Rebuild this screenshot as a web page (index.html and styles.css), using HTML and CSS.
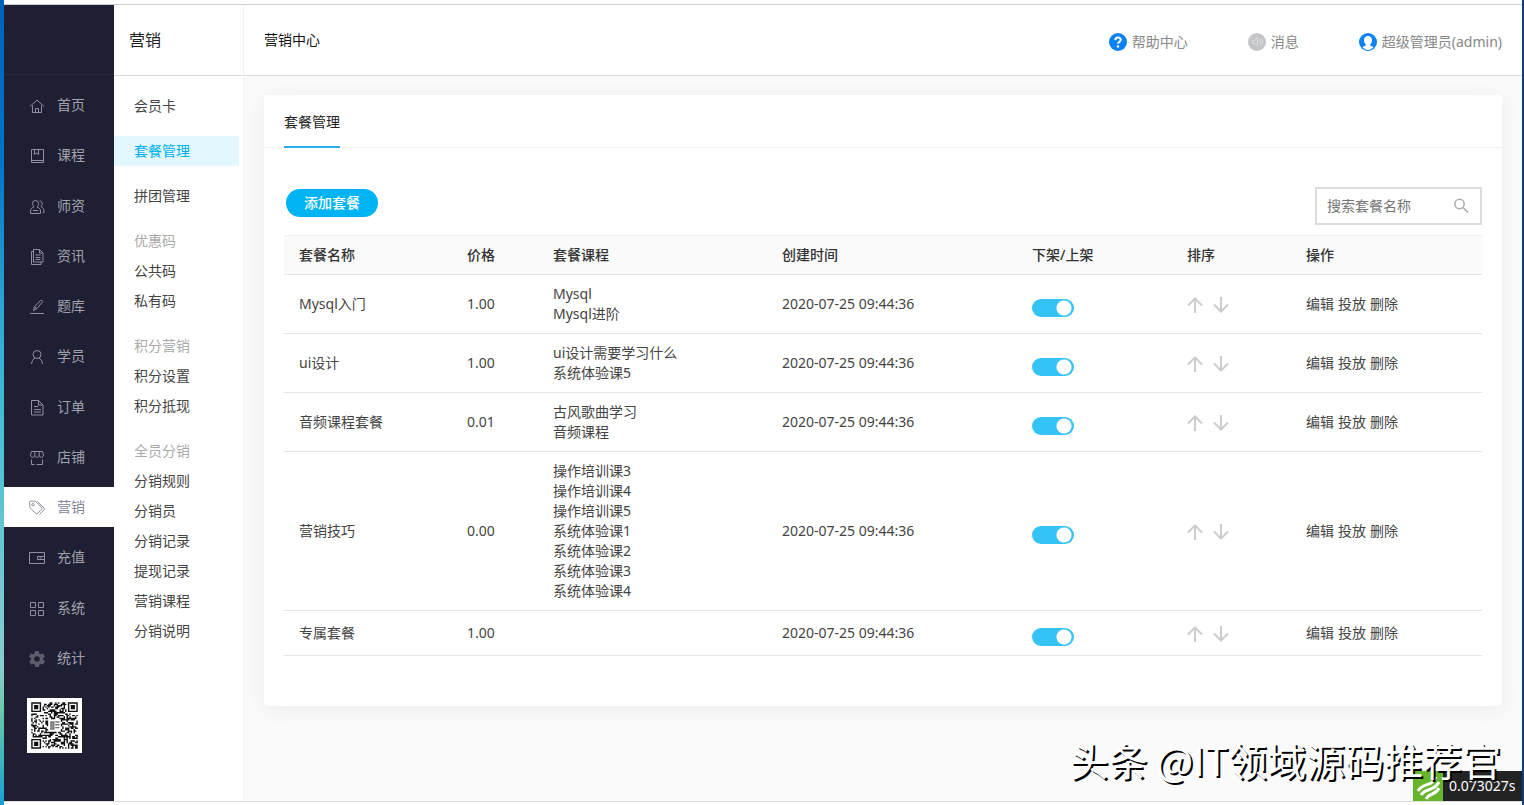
FILE: index.html
```
<!DOCTYPE html>
<html lang="zh-CN">
<head>
<meta charset="utf-8">
<title>营销中心</title>
<link rel="stylesheet" href="styles.css">
</head>
<body>
<div class="desktop">
<div class="window">
  <nav class="sidebar">
    <div class="brand"></div>
    <ul class="menu">
      <li><a href="#"><svg viewBox="0 0 16 16"><path d="M1 8.500 8 2l7 6.500M3.500 7.500V14.500h9V7.500M6.500 14.500v-4h3v4"/></svg>首页</a></li>
      <li><a href="#"><svg viewBox="0 0 16 16"><path d="M2.500 1.500h12v13h-12zM2.500 12.500h12M5.500 1.500v5l2-1.500 2 1.500v-5"/></svg>课程</a></li>
      <li><a href="#"><svg viewBox="0 0 16 16"><path d="M6.500 1.500a3 3 0 0 1 3 3.200c0 1.500-.7 2.600-1.500 3.300 2 .7 3.500 2 3.500 4v2.500h-10V12c0-2 1.500-3.300 3.500-4-.8-.7-1.500-1.800-1.500-3.300a3 3 0 0 1 3-3.200zM10.500 2c2 0 3 1.500 2.700 3.200-.2 1-.7 1.700-1.200 2.300 1.700.9 3 2.200 3 4.500v1.500h-1.500M4 11.500h5"/></svg>师资</a></li>
      <li><a href="#"><svg viewBox="0 0 16 16"><path d="M4.500.500h6l3.500 3.500v9h-9.500zM10.500.500v3.500H14M4.500 2.500h-2v13h9.500V13M6.500 6h5M6.500 8.500h5M6.500 10.500h5"/></svg>资讯</a></li>
      <li><a href="#"><svg viewBox="0 0 16 16"><path d="m4.500 11.500.8-3.500L11.500 1.500q1.500-.8 2.300 1L8 9.500zM5.300 8 8 9.500M1 14.500h14"/></svg>题库</a></li>
      <li><a href="#"><svg viewBox="0 0 16 16"><circle cx="8" cy="5.500" r="4"/><path d="M6 9c-2 1-3 3-3.500 6M10 9c2 1 3 3 3.500 6"/></svg>学员</a></li>
      <li><a href="#"><svg viewBox="0 0 16 16"><path d="M2.500.500h7l4.500 4.500v10h-11.500zM9.500.500V5H14M5 6.500h4M5 9.500h7M5 12h7"/></svg>订单</a></li>
      <li><a href="#"><svg viewBox="0 0 16 16"><path d="M2.500 1.500h11l1 3.500c0 3-4 3-4.300.3C10 8 6 8 5.800 5.300 5.500 8 1.500 8 1.500 5zM5.800 5.300V1.500M10.200 5.300V1.500M2.500 9.500v5h3M13.500 9.500v5h-6"/></svg>店铺</a></li>
      <li class="active"><a href="#"><svg viewBox="0 0 16 16"><path d="M.5 2Q.8 1.200 2 1.200h4.500l6 6.300q.7 1 0 1.800L8.500 13.500q-1 .8-1.800 0L1 7.500zM8.500 1.500l6.500 6.500q.8 1 0 1.800L10.500 14.500"/><circle cx="4" cy="4.700" r="1.200"/></svg>营销</a></li>
      <li><a href="#"><svg viewBox="0 0 16 16"><path d="M.5 2.500h15v11H.5zM15.500 6.500h-7v3h7M10.500 8h2"/></svg>充值</a></li>
      <li><a href="#"><svg viewBox="0 0 16 16"><path d="M1.500 1.500h5v5h-5zM9.500 1.500h5v5h-5zM1.500 9.500h5v5h-5zM9.500 9.500h5v5h-5z"/></svg>系统</a></li>
      <li><a href="#"><svg class="gear" viewBox="2 2 20 20"><path d="M19.400 13a7.800 7.800 0 0 0 0-2l2.100-1.600a.5.5 0 0 0 .1-.6l-2-3.500a.5.5 0 0 0-.6-.2l-2.500 1a7.300 7.300 0 0 0-1.700-1l-.4-2.600a.5.500 0 0 0-.5-.5h-4a.5.5 0 0 0-.5.500l-.4 2.600a7.300 7.300 0 0 0-1.700 1l-2.500-1a.5.5 0 0 0-.6.2l-2 3.500a.5.5 0 0 0 .1.600L4.600 11a7.800 7.800 0 0 0 0 2l-2.100 1.600a.5.5 0 0 0-.1.600l2 3.500c.1.200.4.300.6.200l2.500-1a7.300 7.300 0 0 0 1.700 1l.4 2.600c0 .3.200.5.500.5h4c.3 0 .5-.2.500-.5l.4-2.600a7.300 7.300 0 0 0 1.700-1l2.500 1c.2.100.5 0 .6-.2l2-3.500a.5.5 0 0 0-.1-.6zM12 15.500a3.500 3.500 0 1 1 0-7 3.500 3.500 0 0 1 0 7z"/></svg>统计</a></li>
    </ul>
    <svg class="qr" id="qr" viewBox="0 0 39 39" role="img" aria-label="二维码"></svg>
  </nav>

  <aside class="submenu">
    <h1 class="submenu-title">营销</h1>
    <div class="submenu-body">
      <a href="#">会员卡</a>
      <a href="#" class="current">套餐管理</a>
      <a href="#">拼团管理</a>
      <section>
        <h2>优惠码</h2>
        <a href="#">公共码</a>
        <a href="#">私有码</a>
      </section>
      <section>
        <h2>积分营销</h2>
        <a href="#">积分设置</a>
        <a href="#">积分抵现</a>
      </section>
      <section>
        <h2>全员分销</h2>
        <a href="#">分销规则</a>
        <a href="#">分销员</a>
        <a href="#">分销记录</a>
        <a href="#">提现记录</a>
        <a href="#">营销课程</a>
        <a href="#">分销说明</a>
      </section>
    </div>
  </aside>

  <div class="main">
    <header class="topbar">
      <span class="crumb">营销中心</span>
      <div class="tools">
        <a href="#"><svg viewBox="0 0 18 18"><circle cx="9" cy="9" r="9" fill="#0a82f5"/><path d="M6.300 7.200c0-3.600 5.400-3.600 5.400-.4 0 1.900-2.700 2-2.700 4" fill="none" stroke="#fff" stroke-width="2"/><circle cx="9" cy="13.500" r="1.200" fill="#fff"/></svg>帮助中心</a>
        <a href="#"><svg viewBox="0 0 18 18"><circle cx="9" cy="9" r="9" fill="#c3c5c9"/><path d="M4.500 7.500h2l3-2.500v8l-3-2.500h-2zM11.500 7c1 1 1 3 0 4M13 5.500c2 2 2 5 0 7" fill="none" stroke="#dcdde0"/></svg>消息</a>
        <a href="#"><svg viewBox="0 0 18 18"><circle cx="9" cy="9" r="9" fill="#0a82f5"/><path d="M9 3c2.700 0 4 1.900 4 4.300 0 2-.8 3.500-2 4.300.2 1.400 1.800 1.900 3.700 2.500C13 16.200 11 17 9 17s-4-.8-5.700-2.900c1.900-.6 3.500-1.100 3.700-2.500-1.200-.8-2-2.300-2-4.300C5 4.900 6.300 3 9 3z" fill="#fff"/></svg>超级管理员(admin)</a>
      </div>
    </header>

    <main class="content">
      <div class="card">
        <div class="tabs"><a href="#" class="tab">套餐管理</a></div>
        <div class="card-body">
          <div class="actions">
            <button class="add" type="button">添加套餐</button>
            <label class="search">
              <input type="text" placeholder="搜索套餐名称" aria-label="搜索套餐名称">
              <svg viewBox="0 0 16 16"><circle cx="6.500" cy="6" r="4.700"/><path d="m10 9.500 5 5"/></svg>
            </label>
          </div>
          <table class="packages">
            <colgroup><col class="c-name"><col class="c-price"><col class="c-course"><col class="c-time"><col class="c-state"><col class="c-sort"><col class="c-ops"></colgroup>
            <thead><tr><th>套餐名称</th><th>价格</th><th>套餐课程</th><th>创建时间</th><th>下架/上架</th><th>排序</th><th>操作</th></tr></thead>
            <tbody id="rows"></tbody>
          </table>
        </div>
      </div>
    </main>
  </div>

  <div class="watermark">头条 @IT领域源码推荐官</div>
  <div class="trace">
    <svg viewBox="0 0 30 30"><path fill="#67b52b" d="M0 0h30v30H0z"/><path d="M5 20C10 11 18 17 23 6M8 24c5-8 13-3 18-13M13 28c4-7 9-3 13-11" fill="none" stroke="#fff" stroke-width="3"/></svg>
    <span>0.073027s</span>
  </div>
</div>
</div>
<script src="script.js"></script>
</body>
</html>
```
FILE: styles.css
```
* { box-sizing: border-box; }
body {
  margin: 0;
  font-family: "Noto Sans", "Noto Sans CJK SC", sans-serif;
  font-size: 14px;
  line-height: 20px;
  color: #444;
}
a { color: inherit; text-decoration: none; }
ul, h1, h2 { margin: 0; padding: 0; list-style: none; font-weight: 400; }

/* Desktop edges showing on either side of the window */
.desktop {
  min-height: 100vh;
  padding: 4px 2px 3px 4px;
  background:
    linear-gradient(#fff, #fff) 4px 0 / calc(100% - 6px) 100% no-repeat,
    linear-gradient(#0f3f7a, #0f3f7a) 100% 0 / 2px 100% no-repeat,
    linear-gradient(#0062b8 0%, #0075c8 20%, #2aa5d4 38%, #4fc0d6 55%, #8accd0 83%, #6cc9a8 88%, #189fd2 100%);
}
.window {
  position: relative;
  display: flex;
  min-height: calc(100vh - 7px);
  border-top: 1px solid #ccc;
  border-bottom: 1px solid #ddd;
  background: #fafafa;
}

.sidebar { flex: none; width: 110px; background: #1e1f32; color: #a1a2ad; }
.brand { height: 70px; border-bottom: 1px solid #2a2b3d; }
.menu {
  display: flex;
  flex-direction: column;
  justify-content: space-between;
  height: 593px;
  margin: 10px 0 20px;
}
.menu a { display: flex; align-items: center; gap: 12px; height: 40px; padding: 0 25px; white-space: nowrap; }
.menu svg { flex: none; width: 16px; height: 16px; margin-top: 2px; fill: none; stroke: #8f90a0; overflow: visible; }
.menu .gear { fill: #5c5e6d; stroke: none; }
.menu .active { background: #fff; color: #85869a; }
.qr { display: block; width: 55px; height: 55px; margin-left: 23px; background: #fff; }

.submenu { flex: none; width: 130px; background: #fff; border-right: 1px solid #f2f2f2; }
.submenu-title {
  height: 71px;
  padding: 0 15px;
  border-bottom: 1px solid #ddd;
  font-size: 16px;
  line-height: 70px;
  color: #222;
}
.submenu-body { display: flex; flex-direction: column; gap: 15px; padding: 15px 4px 0 0; }
.submenu-body a, .submenu-body h2 { display: block; padding: 0 20px; font-size: 14px; line-height: 30px; }
.submenu-body h2 { color: #aaa; }
.submenu-body .current { background: #e3f7ff; color: #00b0ee; }

.main { flex: 1; min-width: 0; }
.topbar {
  display: flex;
  justify-content: space-between;
  align-items: center;
  height: 71px;
  padding: 0 20px;
  border-bottom: 1px solid #ddd;
  background: #fff;
}
.crumb { color: #111; }
.tools { display: flex; gap: 60px; padding-top: 3px; color: #888; }
.tools a { display: flex; align-items: center; gap: 5px; }
.tools svg { width: 18px; height: 18px; }

.content { padding: 19px 20px; }
.card { background: #fff; border-radius: 4px; box-shadow: 0 4px 24px rgba(0, 0, 0, 0.06); }
.tabs { display: flex; height: 53px; padding: 0 20px; border-bottom: 1px solid #eee; }
.tab { height: 53px; border-bottom: 2px solid #2eaee6; line-height: 54px; color: #222; }
.card-body { padding: 39px 20px 50px; }
.actions { display: flex; justify-content: space-between; align-items: flex-start; padding-left: 2px; margin-bottom: 10px; }
.add {
  width: 92px;
  height: 28px;
  margin-top: 2px;
  padding: 0;
  border: 0;
  border-radius: 14px;
  background: #00b4f3;
  color: #fff;
  font: 500 14px/28px "Noto Sans", "Noto Sans CJK SC", sans-serif;
}
.search { display: flex; align-items: center; width: 167px; height: 38px; padding: 0 11px 0 10px; border: 2px solid #ddd; }
.search input { flex: 1; min-width: 0; padding: 0; border: 0; outline: 0; background: none; font: inherit; color: #444; }
.search input::placeholder { color: #757575; }
.search svg { width: 16px; height: 16px; fill: none; stroke: #aaa; stroke-width: 1.5; }

.packages { width: 100%; border-collapse: separate; border-spacing: 0; table-layout: fixed; }
.c-name { width: 168px; }
.c-price { width: 86px; }
.c-course { width: 229px; }
.c-time { width: 250px; }
.c-state { width: 155px; }
.c-sort { width: 119px; }
.c-ops { width: 191px; }
.packages th { padding: 9px 15px; border-top: 1px solid #eee; border-bottom: 1px solid #e4e4e4; background: #fafafa; text-align: left; font-weight: 500; color: #333; }
.packages td { padding: 9px 15px; border-bottom: 1px solid #e6e6e6; vertical-align: middle; }
.packages td.state { padding: 17px 15px 9px; }
.toggle {
  display: block;
  appearance: none;
  width: 42px;
  height: 18px;
  margin: 0;
  border-radius: 9px;
  background: radial-gradient(circle at 32px 9px, #fff 7px, #35c3f5 8px);
}
.sort { display: flex; gap: 10px; }
.sort button { width: 16px; height: 20px; padding: 3px 0 1px; border: 0; background: none; }
.sort svg { display: block; width: 16px; height: 16px; fill: none; stroke: #ccc; stroke-width: 2; }
.ops { display: flex; gap: 4px; }

.watermark {
  position: absolute;
  right: 21px;
  bottom: 14px;
  font-family: "Noto Sans CJK SC", sans-serif;
  font-size: 39px;
  line-height: 56px;
  white-space: nowrap;
  color: #fff;
  text-shadow: 2px 2px 0 #000;
  z-index: 2;
}
.trace { position: absolute; right: 0; bottom: 0; z-index: 1; display: flex; width: 109px; height: 30px; background: #232323; color: #fff; line-height: 30px; }
.trace svg { width: 30px; height: 30px; }
.trace span { padding-left: 6px; }
```
FILE: script.js
```
const packages = [
  ['Mysql入门', '1.00', ['Mysql', 'Mysql进阶']],
  ['ui设计', '1.00', ['ui设计需要学习什么', '系统体验课5']],
  ['音频课程套餐', '0.01', ['古风歌曲学习', '音频课程']],
  ['营销技巧', '0.00', ['操作培训课3', '操作培训课4', '操作培训课5', '系统体验课1', '系统体验课2', '系统体验课3', '系统体验课4']],
  ['专属套餐', '1.00', []]
];

document.getElementById('rows').innerHTML = packages.map(([name, price, courses]) => `
  <tr>
    <td>${name}</td>
    <td>${price}</td>
    <td>${courses.join('<br>')}</td>
    <td>2020-07-25 09:44:36</td>
    <td class="state"><input class="toggle" type="checkbox" role="switch" checked aria-label="上架 ${name}"></td>
    <td><div class="sort">
      <button type="button" aria-label="上移"><svg viewBox="0 0 16 16"><path d="M8 16V1.500M1 8.500l7-7 7 7"/></svg></button>
      <button type="button" aria-label="下移"><svg viewBox="0 0 16 16"><path d="M8 0v14.500M1 7.500l7 7 7-7"/></svg></button>
    </div></td>
    <td><div class="ops"><a href="#">编辑</a><a href="#">投放</a><a href="#">删除</a></div></td>
  </tr>`).join('');

// QR code: 33 modules with a 3-module quiet zone, three finders and a centre badge
const size = 33;
let seed = 7;
const random = () => (seed = (seed * 16807) % 2147483647) / 2147483647;
let path = '';
for (let y = 0; y < size; y++) {
  for (let x = 0; x < size; x++) {
    const dark = random() < 0.52;
    const inFinder = (x < 8 && y < 8) || (x > 24 && y < 8) || (x < 8 && y > 24);
    const inBadge = x > 11 && x < 21 && y > 11 && y < 21;
    if (dark && !inFinder && !inBadge) path += `M${x + 3} ${y + 3}h1v1h-1z`;
  }
}
for (const [x, y] of [[3, 3], [29, 3], [3, 29]]) {
  path += `M${x} ${y}h7v7h-7zM${x + 1} ${y + 1}v5h5v-5zM${x + 2} ${y + 2}h3v3h-3z`;
}
document.getElementById('qr').innerHTML =
  `<path fill="#111" d="${path}"/><path d="M17 17h2v5h-2zM20 17h3M20 19h3M20 21h3" fill="#999" stroke="#777"/>`;
```
